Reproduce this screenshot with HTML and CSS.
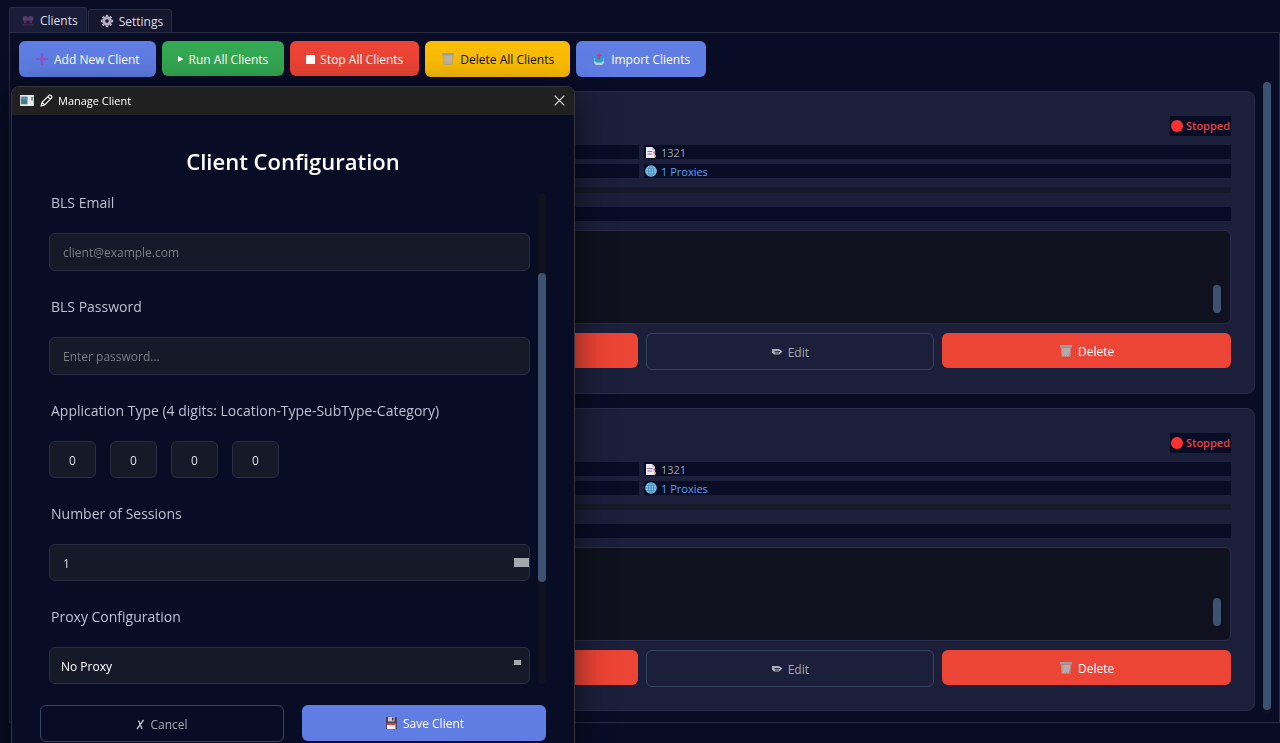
FILE: index.html
```html
<!DOCTYPE html>
<html lang="en">
<head>
    <meta charset="UTF-8">
    <meta name="viewport" content="width=device-width, initial-scale=1.0">
    <title>Client Manager</title>
    <link rel="stylesheet" href="styles.css">
</head>
<body>
    <!-- shared icons -->
    <svg class="sprite" aria-hidden="true">
        <symbol id="trash" viewBox="0 0 14 14">
            <path d="M1.500 2.500h11l-1 10.500h-9z" fill="#a3a5a9" fill-opacity=".6"/>
            <path d="M2.500 4l2 2-2 2 2 2-1 2M5 4l2 2-2 2 2 2-1 2M7 4l2 2-2 2 2 2-1 2M9 4l2 2-2 2 1 2-1 2M5 4L3.500 6l1.500 2-1 2 1 2M7 4L5 6l2 2-2 2 2 2M9 4L7 6l2 2-2 2 2 2M11 4L9 6l2 2-2 2" fill="none" stroke="#b4bbbf" stroke-width=".7"/>
            <path d="M1 1h12v2.200H1z" fill="#9aa0a3"/>
        </symbol>
        <symbol id="pages" viewBox="0 0 12 12">
            <path d="M1 1h6l3 3v8H1z" fill="#efe8f6"/>
            <path d="M7 1v3h3z" fill="#c7bbd6"/>
            <path d="M2.500 5.500h5M2.500 8h5" stroke="#857a98" stroke-width="1"/>
            <path d="M8.500 5.500h2v2h-2z" fill="#e4468e"/>
            <path d="M9 9h2v2H9z" fill="#eaa23b"/>
        </symbol>
        <symbol id="globe" viewBox="0 0 12 12">
            <circle cx="6" cy="6" r="5.800" fill="#7fc4ee"/>
            <g fill="none" stroke="#3b7bab" stroke-width=".6">
                <ellipse cx="6" cy="6" rx="2.600" ry="5.400"/>
                <path d="M6 .5v11M.5 6h11M1.500 3.300h9M1.500 8.700h9"/>
            </g>
        </symbol>
        <symbol id="pencil" viewBox="0 0 12 8">
            <path d="M1 1h7l3.500 2.500L8 6.500H3L1 4.500z" fill="#a9adb5"/>
            <path d="M3.500 3.500H9M4 5h4" stroke="#1b1f3a" stroke-width=".8"/>
        </symbol>
    </svg>

    <div class="app">
        <nav class="tabs">
            <button class="tab active">
                <svg class="tab-icon" viewBox="0 0 14 12" aria-hidden="true">
                    <circle cx="4.300" cy="3.800" r="2.700" fill="#5a3a6b"/>
                    <circle cx="9.700" cy="3.800" r="2.700" fill="#5a3a6b"/>
                    <path d="M3 5h2.500v3H3zM8.500 5H11v3H8.500z" fill="#4a2f5a"/>
                    <path d="M1 10.500c0-3 6-3 6 0 0-3 6-3 6 0z" fill="#43204a"/>
                </svg>
                Clients
            </button>
            <button class="tab">
                <svg class="tab-icon" viewBox="0 0 14 14" aria-hidden="true">
                    <circle cx="7" cy="7" r="3.300" fill="none" stroke="#b3a9c0" stroke-width="3"/>
                    <path d="M7 .8v2M7 11.200v2M.8 7h2M11.200 7h2M2.600 2.600L4 4M10 10l1.400 1.400M2.600 11.400L4 10M10 4l1.400-1.400" stroke="#b3a9c0" stroke-width="2.400"/>
                </svg>
                Settings
            </button>
        </nav>

        <main class="pane">
            <div class="toolbar">
                <button class="btn blue">
                    <svg class="icon" viewBox="0 0 14 14" aria-hidden="true"><path d="M7 1v12M1 7h12" stroke="#8a55c4" stroke-width="2.200"/></svg>
                    Add New Client
                </button>
                <button class="btn green">
                    <svg class="icon-small" viewBox="0 0 6 8" aria-hidden="true"><path d="M0 1l5.500 3L0 7z" fill="#fff"/></svg>
                    Run All Clients
                </button>
                <button class="btn red">
                    <svg class="icon-square" viewBox="0 0 9 9" aria-hidden="true"><path d="M0 0h9v9H0z" fill="#fff"/></svg>
                    Stop All Clients
                </button>
                <button class="btn yellow">
                    <svg class="icon" aria-hidden="true"><use href="#trash"/></svg>
                    Delete All Clients
                </button>
                <button class="btn blue">
                    <svg class="icon" viewBox="0 0 14 14" aria-hidden="true">
                        <path d="M2 6h10v5l-2 2H4l-2-2z" fill="#c4ccd4"/>
                        <path d="M2.500 3.500h9v5l-2 2h-5l-2-2z" fill="#12a5ee"/>
                        <path d="M7 1l3 3H8.300v3.500H5.700V4H4z" fill="#e0345c"/>
                    </svg>
                    Import Clients
                </button>
            </div>

            <div class="content">
                <div class="cards">
                    <section class="card">
                        <div class="status"><span class="dot"></span>Stopped</div>
                        <div class="info">
                            <div class="cell"></div>
                            <div class="cell"><svg class="cell-icon" aria-hidden="true"><use href="#pages"/></svg>1321</div>
                            <div class="cell"></div>
                            <div class="cell proxies"><svg class="cell-icon" aria-hidden="true"><use href="#globe"/></svg>1 Proxies</div>
                        </div>
                        <div class="progress"></div>
                        <div class="message"></div>
                        <div class="log"><div class="log-thumb"></div></div>
                        <div class="actions">
                            <button class="btn red stop" aria-label="Stop"></button>
                            <button class="btn outline"><svg class="pencil" aria-hidden="true"><use href="#pencil"/></svg>Edit</button>
                            <button class="btn red"><svg class="icon" aria-hidden="true"><use href="#trash"/></svg>Delete</button>
                        </div>
                    </section>

                    <section class="card">
                        <div class="status"><span class="dot"></span>Stopped</div>
                        <div class="info">
                            <div class="cell"></div>
                            <div class="cell"><svg class="cell-icon" aria-hidden="true"><use href="#pages"/></svg>1321</div>
                            <div class="cell"></div>
                            <div class="cell proxies"><svg class="cell-icon" aria-hidden="true"><use href="#globe"/></svg>1 Proxies</div>
                        </div>
                        <div class="progress"></div>
                        <div class="message"></div>
                        <div class="log"><div class="log-thumb"></div></div>
                        <div class="actions">
                            <button class="btn red stop" aria-label="Stop"></button>
                            <button class="btn outline"><svg class="pencil" aria-hidden="true"><use href="#pencil"/></svg>Edit</button>
                            <button class="btn red"><svg class="icon" aria-hidden="true"><use href="#trash"/></svg>Delete</button>
                        </div>
                    </section>
                </div>
                <div class="page-track"><div class="page-thumb"></div></div>
            </div>
        </main>
    </div>

    <div class="dialog" role="dialog" aria-labelledby="dialogTitle">
        <header class="titlebar">
            <svg class="app-icon" viewBox="0 0 15 12" aria-hidden="true">
                <path d="M0 0h15v12H0z" fill="#e8eaec"/>
                <path d="M1 2h7v8H1z" fill="#3f7f86"/>
                <path d="M1 2h7v3H1z" fill="#5a8fb0"/>
                <path d="M12 2h2v4h-2z" fill="#57a07c"/>
            </svg>
            <svg class="edit-icon" viewBox="0 0 14 14" aria-hidden="true">
                <path d="M1.200 12.800l1-3.800L9.800 1.400q1-.8 2 .2l.7.700q.8 1 0 1.900L5 11.800zM8.500 3l2.600 2.600M2.200 9L5 11.800" fill="none" stroke="#fff" stroke-width="1.200"/>
            </svg>
            <span id="dialogTitle">Manage Client</span>
            <button class="close" aria-label="Close">
                <svg viewBox="0 0 11 11" aria-hidden="true"><path d="M.7.7l9.600 9.600M10.300.7L.7 10.300" stroke="#e0e0e0" stroke-width="1.200"/></svg>
            </button>
        </header>

        <form class="dialog-body">
            <h1>Client Configuration</h1>

            <div class="form-scroll">
                <div class="fields">
                    <div class="field">
                        <label for="email">BLS Email</label>
                        <input type="email" id="email" placeholder="client@example.com">
                    </div>
                    <div class="field">
                        <label for="password">BLS Password</label>
                        <input type="password" id="password" placeholder="Enter password...">
                    </div>
                    <div class="field">
                        <label for="digit1">Application Type (4 digits: Location-Type-SubType-Category)</label>
                        <div class="digits">
                            <input type="text" class="short" id="digit1" value="0" maxlength="1">
                            <input type="text" class="short" aria-label="Type" value="0" maxlength="1">
                            <input type="text" class="short" aria-label="SubType" value="0" maxlength="1">
                            <input type="text" class="short" aria-label="Category" value="0" maxlength="1">
                        </div>
                    </div>
                    <div class="field">
                        <label for="sessions">Number of Sessions</label>
                        <input type="number" class="short spin" id="sessions" value="1" min="1">
                    </div>
                    <div class="field">
                        <label for="proxy">Proxy Configuration</label>
                        <select class="short" id="proxy">
                            <option>No Proxy</option>
                        </select>
                    </div>
                </div>
                <div class="form-track"><div class="form-thumb"></div></div>
            </div>

            <div class="dialog-buttons">
                <button type="button" class="btn outline">
                    <svg class="cross" viewBox="0 0 9 11" aria-hidden="true"><path d="M1 10L7.500 1M2.500 1.500L6 10" fill="none" stroke="#c3c6cc" stroke-width="1.300"/></svg>
                    Cancel
                </button>
                <button type="button" class="btn blue">
                    <svg class="icon" viewBox="0 0 14 14" aria-hidden="true">
                        <path d="M2 1h10l1 1v11H2z" fill="#4a3f55"/>
                        <path d="M4 1h6.500v4.500H4z" fill="#c9c6d0"/>
                        <path d="M8 1.500h1.500v3H8z" fill="#3a3442"/>
                        <path d="M3 7.500h8.500V13H3z" fill="#f1eff4"/>
                        <path d="M3 7h8.500v2H3z" fill="#e2403a"/>
                    </svg>
                    Save Client
                </button>
            </div>
        </form>
    </div>
</body>
</html>
```
FILE: styles.css
```css
* {
    box-sizing: border-box;
}

body {
    margin: 0;
    height: 100vh;
    overflow: hidden;
    background-color: #090c25;
    color: #dcdfe8;
    font-family: "Open Sans", "Noto Sans", sans-serif;
    font-size: 12px;
}

button,
input,
select {
    font-family: inherit;
    font-size: 12px;
}

.sprite {
    position: absolute;
    width: 0;
    height: 0;
}

.app {
    height: 100vh;
    padding: 7px 0 20px 9px;
    display: flex;
    flex-direction: column;
}

/* Tabs */
.tabs {
    display: flex;
    align-items: flex-end;
    gap: 1px;
}

.tab {
    display: flex;
    align-items: center;
    gap: 5px;
    height: 23px;
    padding: 0 8px 0 11px;
    border: 1px solid #2a2d42;
    border-bottom: none;
    border-radius: 3px 3px 0 0;
    background-color: #14172d;
    color: #dcdfe8;
}

.tab.active {
    height: 26px;
    margin-bottom: -1px;
    background-color: #1a1d38;
}

.tab-icon {
    width: 14px;
    height: 14px;
}

.pane {
    flex: 1;
    min-height: 0;
    display: flex;
    flex-direction: column;
    border: 1px solid #2a2d42;
    padding: 8px 8px 8px 9px;
}

/* Buttons */
.btn {
    display: flex;
    align-items: center;
    justify-content: center;
    gap: 5px;
    height: 36px;
    padding: 0 16px;
    border: none;
    border-radius: 6px;
    color: #fff;
    white-space: nowrap;
}

.blue {
    background-color: #5f7de3;
}

.green {
    height: 35px;
    padding-top: 1px;
    background-color: #34a853;
}

.red {
    height: 35px;
    padding-top: 1px;
    background-color: #ec4435;
}

.yellow {
    background-color: #fbbc04;
    color: #0a0e27;
}

.outline {
    height: 37px;
    padding-top: 1px;
    border: 1px solid #34465f;
    background-color: transparent;
    color: #a5a9b3;
}

.icon {
    width: 14px;
    height: 14px;
}

.icon-small {
    width: 6px;
    height: 8px;
}

.icon-square {
    width: 9px;
    height: 9px;
}

.toolbar {
    display: flex;
    gap: 6px;
}

/* Client cards */
.content {
    flex: 1;
    min-height: 0;
    display: flex;
    gap: 8px;
    padding-top: 5px;
}

.cards {
    flex: 1;
    display: flex;
    flex-direction: column;
    gap: 14px;
    padding: 9px 0 0 9px;
}

.card {
    display: flex;
    flex-direction: column;
    padding: 24px 23px;
    border: 1px solid #282c49;
    border-radius: 8px;
    background-color: #1b1f3a;
}

.status {
    align-self: flex-end;
    display: flex;
    align-items: center;
    gap: 3px;
    height: 20px;
    padding: 0 1px 1px;
    background-color: #090c25;
    color: #e04343;
    font-size: 11px;
    font-weight: 600;
}

.dot {
    width: 12px;
    height: 12px;
    border-radius: 50%;
    background-color: #ff3030;
}

.info {
    display: grid;
    grid-template-columns: 1fr 1fr;
    gap: 5px;
    margin-top: 9px;
}

.cell {
    display: flex;
    align-items: center;
    gap: 4px;
    height: 14px;
    padding-left: 1px;
    background-color: #090c25;
    color: #a0a4ae;
    font-size: 11px;
}

.cell-icon {
    width: 12px;
    height: 12px;
}

.proxies {
    color: #58a0f5;
    font-weight: 500;
}

.progress {
    height: 6px;
    margin-top: 9px;
    background-color: #161928;
}

.message {
    height: 14px;
    margin-top: 14px;
    background-color: #090c25;
}

.log {
    display: flex;
    justify-content: flex-end;
    height: 94px;
    margin-top: 9px;
    padding: 54px 9px 9px;
    border: 1px solid #282c49;
    border-radius: 6px;
    background-color: #0f121e;
}

.card:last-child .log {
    padding-top: 50px;
}

.log-thumb {
    width: 8px;
    height: 28px;
    border-radius: 4px;
    background-color: #3c5270;
}

.actions {
    display: grid;
    grid-template-columns: repeat(4, 1fr);
    gap: 8px;
    height: 36px;
    margin-top: 9px;
}

.stop {
    grid-column: 2;
}

.pencil {
    width: 12px;
    height: 8px;
}

.page-track {
    width: 8px;
    padding-bottom: 4px;
    border-radius: 4px;
    background-color: #0f121e;
}

.page-thumb {
    height: 100%;
    border-radius: 4px;
    background-color: #3c5270;
}

/* Dialog window */
.dialog {
    position: fixed;
    top: 86px;
    left: 11px;
    width: 564px;
    border: 1px solid #35363b;
    border-radius: 8px 8px 0 0;
    background-color: #090c25;
    box-shadow: 0 6px 36px rgba(0, 0, 0, 0.55);
    overflow: hidden;
}

.titlebar {
    display: flex;
    align-items: center;
    gap: 5px;
    height: 28px;
    padding: 0 9px 2px 8px;
    background-color: #202020;
    color: #fff;
    font-size: 11px;
}

.app-icon {
    width: 14px;
    height: 11px;
    margin-right: 1px;
}

.edit-icon {
    width: 13px;
    height: 13px;
}

.close {
    margin-left: auto;
    padding: 0;
    border: none;
    background: none;
    line-height: 0;
}

.close svg {
    width: 11px;
    height: 11px;
}

.dialog-body {
    padding: 30px 28px 24px;
}

h1 {
    margin: 0;
    color: #fff;
    font-size: 22px;
    font-weight: 600;
    line-height: 32px;
    text-align: center;
}

.form-scroll {
    display: flex;
    gap: 8px;
    padding: 16px 0 16px 9px;
}

.fields {
    flex: 1;
    display: flex;
    flex-direction: column;
    gap: 26px;
}

.field {
    display: flex;
    flex-direction: column;
    gap: 20px;
}

.field label {
    padding-left: 2px;
    color: #bcc0d2;
    font-size: 14px;
    line-height: 20px;
}

.field input,
.field select {
    width: 100%;
    height: 38px;
    padding: 1px 13px 0;
    border: 1px solid #2a2d42;
    border-radius: 6px;
    background-color: #161928;
    color: #dcdfe8;
    appearance: none;
}

.field select {
    padding: 1px 11px 0;
    color: #fff;
    background-image: linear-gradient(#a3a7ae, #a3a7ae);
    background-repeat: no-repeat;
    background-position: right 8px top 12px;
    background-size: 7px 5px;
}

.field input::placeholder {
    color: #7a7d85;
}

.field .short {
    height: 37px;
}

.field .spin {
    background-image: linear-gradient(#a3a7ae, #a3a7ae);
    background-repeat: no-repeat;
    background-position: right center;
    background-size: 15px 9px;
    appearance: textfield;
}

.digits {
    display: flex;
    gap: 14px;
}

.field .digits input {
    width: 47px;
    padding: 1px 0 0;
    text-align: center;
}

.form-track {
    width: 8px;
    padding-top: 80px;
    border-radius: 4px;
    background-color: #0f121e;
}

.form-thumb {
    height: 309px;
    border-radius: 4px;
    background-color: #3c5270;
}

.dialog-buttons {
    display: grid;
    grid-template-columns: 1fr 1fr;
    gap: 18px;
    padding-top: 5px;
}

.cross {
    width: 9px;
    height: 11px;
}
```
